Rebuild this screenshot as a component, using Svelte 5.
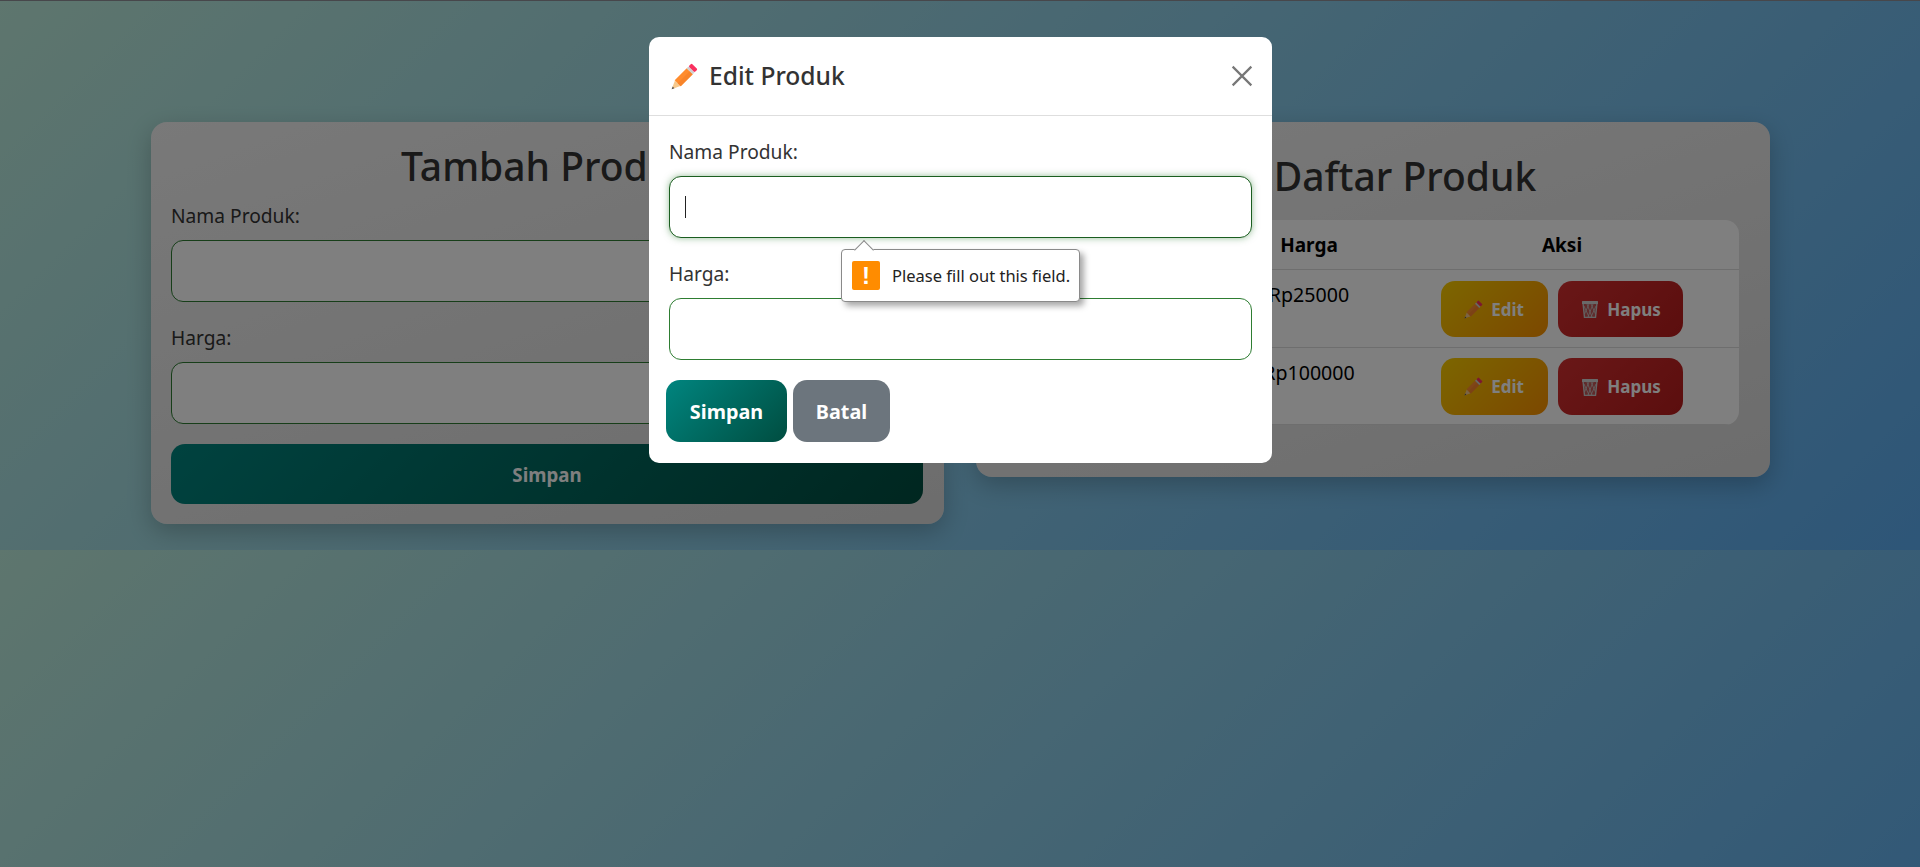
<script>
  const rows = [
    { harga: 'Rp25000', cls: 'r1' },
    { harga: 'Rp100000', cls: 'r2' }
  ];
</script>

{#snippet pencil(cls)}
  <svg class={cls} viewBox="3 -2 35 35" aria-hidden="true">
    <g transform="rotate(45 18 18)">
      <polygon points="13,27 23,27 18,38" fill="#f7c98c" />
      <polygon points="16.4,34.5 19.6,34.5 18,38" fill="#555" />
      <rect x="12.5" y="5" width="11" height="22" fill="#ff8c2e" />
      <rect x="18" y="5" width="5.5" height="22" fill="#f8842a" />
      <rect x="12.5" y="1.5" width="11" height="3.5" fill="#cfcfcf" />
      <rect x="12.5" y="-4" width="11" height="5.5" rx="1.5" fill="#f9305f" />
    </g>
  </svg>
{/snippet}

{#snippet trash()}
  <svg class="ic-trash" viewBox="0 0 18 18" aria-hidden="true">
    <polygon points="2,3 16,3 14.5,17.5 3.5,17.5" fill="#b0b0b0" fill-opacity=".35" stroke="#c8c8c8" stroke-width="1.4" />
    <path d="M3 6 L8 17 M6 4 L11 17 M10 4 L14.5 14 M15 6 L10 17 M12 4 L7 17 M8 4 L3.5 14" stroke="#c8c8c8" stroke-width=".8" fill="none" />
    <rect x="1" y="1" width="16" height="3" rx=".6" fill="#d2d2d2" />
  </svg>
{/snippet}

<div class="topline"></div>
<main class="page">
  <section class="card form-card">
    <h2>Tambah Produk</h2>
    <div class="group">
      <label for="a1">Nama Produk:</label>
      <input id="a1" type="text" />
    </div>
    <div class="group">
      <label for="a2">Harga:</label>
      <input id="a2" type="text" />
    </div>
    <button class="btn teal wide">Simpan</button>
  </section>

  <section class="card list-card">
    <h2 class="list-title">Daftar Produk</h2>
    <table>
      <colgroup>
        <col class="c-name" /><col class="c-price" /><col class="c-act" />
      </colgroup>
      <thead>
        <tr><th></th><th>Harga</th><th>Aksi</th></tr>
      </thead>
      <tbody>
        {#each rows as row}
          <tr class={row.cls}>
            <td></td>
            <td class="price">{row.harga}</td>
            <td class="actions">
              <button class="mini yellow">{@render pencil('ic-mini')}Edit</button>
              <button class="mini red">{@render trash()}Hapus</button>
            </td>
          </tr>
        {/each}
      </tbody>
    </table>
  </section>
</main>

<div class="backdrop"></div>

<div class="modal-wrap">
  <div class="modal">
    <header class="modal-head">
      {@render pencil('ic-head')}
      <h3>Edit Produk</h3>
      <button class="close" aria-label="Close">
        <svg viewBox="0 0 20 20"><path d="M1.5 1.5 L18.5 18.5 M18.5 1.5 L1.5 18.5" stroke="#777" stroke-width="2" fill="none" /></svg>
      </button>
    </header>
    <div class="modal-body">
      <div class="group">
        <label for="m1">Nama Produk:</label>
        <div class="field">
          <input id="m1" class="focus" type="text" />
          <span class="caret"></span>
        </div>
        <div class="bubble">
          <span class="arrow"></span>
          <span class="warn">!</span>
          <span class="msg">Please fill out this field.</span>
        </div>
      </div>
      <div class="group">
        <label for="m2">Harga:</label>
        <input id="m2" type="text" />
      </div>
      <div class="modal-actions">
        <button class="btn teal">Simpan</button>
        <button class="btn grey">Batal</button>
      </div>
    </div>
  </div>
</div>

<style>
  :global(body) {
    margin: 0;
    font-family: "Noto Sans", "Open Sans", sans-serif;
    color: #333;
    background: linear-gradient(135deg, #bcecdc, #5cacf0);
  }
  .topline {
    height: 1px;
    background: #8e8e96;
  }
  .page {
    display: grid;
    grid-template-columns: 793px 794px;
    column-gap: 32px;
    align-items: start;
    padding: 121px 150px 26px 151px;
  }
  .card {
    background: linear-gradient(160deg, #f2f2f2, #dadada);
    border-radius: 16px;
    box-shadow: 0 8px 24px rgba(0, 0, 0, 0.22);
    box-sizing: border-box;
  }
  .form-card {
    padding: 20px;
    height: 402px;
  }
  .list-card {
    padding: 30px 31px 0;
    height: 355px;
  }
  h2 {
    margin: 0 0 15px;
    font-size: 39px;
    line-height: 48px;
    font-weight: 500;
    text-align: center;
    color: #333;
  }
  .list-title {
    margin-bottom: 20px;
    padding-left: 64px;
  }
  .group {
    position: relative;
    height: 122.3px;
  }
  label {
    display: block;
    font-size: 19.2px;
    line-height: 21px;
    margin-bottom: 14px;
  }
  input {
    display: block;
    width: 100%;
    height: 61.5px;
    box-sizing: border-box;
    border: 1px solid #2e7d32;
    border-radius: 12px;
    background: #fff;
    outline: none;
    padding: 0 14px;
    caret-color: transparent;
  }
  input.focus {
    border-color: #1b5e20;
    box-shadow: 0 0 7px rgba(46, 125, 50, 0.5);
  }
  .field {
    position: relative;
  }
  .caret {
    position: absolute;
    left: 16px;
    top: 20px;
    width: 1px;
    height: 22px;
    background: #222;
  }
  .btn {
    border: 0;
    color: #fff;
    font-family: inherit;
    font-weight: 700;
    font-size: 19.8px;
    border-radius: 14px;
    cursor: pointer;
    width: 121px;
  }
  .teal {
    background: linear-gradient(135deg, #00857f, #004d40);
  }
  .wide {
    display: block;
    width: 752px;
    height: 60px;
    margin-top: -5.6px;
    font-size: 18.7px;
  }
  .grey {
    background: #6c757d;
    width: 97px;
  }
  table {
    width: 100%;
    table-layout: fixed;
    border-collapse: separate;
    border-spacing: 0;
    background: #fff;
    border-radius: 14px;
    overflow: hidden;
    color: #000;
    font-size: 19px;
  }
  .c-name {
    width: 226px;
  }
  .c-price {
    width: 152px;
  }
  th {
    height: 50px;
    padding: 0;
    font-weight: 700;
    text-align: center;
    border-bottom: 1px solid #ddd;
    box-sizing: border-box;
  }
  td {
    padding: 0;
    box-sizing: border-box;
    vertical-align: top;
    border-bottom: 1px solid #ddd;
  }
  .r1 td {
    height: 78px;
  }
  .r2 td {
    height: 77px;
  }
  .price {
    text-align: center;
    font-size: 19.6px;
    line-height: 27px;
    padding-top: 11px;
  }
  .actions {
    padding-top: 11px;
    text-align: center;
  }
  .r2 .actions {
    padding-top: 10px;
  }
  .r2 .mini {
    height: 57px;
  }
  .mini {
    display: inline-flex;
    align-items: center;
    justify-content: center;
    gap: 8px;
    height: 56px;
    border: 0;
    border-radius: 14px;
    color: #fff;
    font-family: inherit;
    font-weight: 700;
    font-size: 17px;
    padding: 0;
    vertical-align: top;
  }
  .yellow {
    width: 107px;
    background: linear-gradient(135deg, #f8cc00, #f89000);
  }
  .red {
    width: 125px;
    margin-left: 6px;
    background: linear-gradient(135deg, #d32f2f, #b71c1c);
  }
  .ic-mini {
    width: 19px;
    height: 19px;
  }
  .ic-trash {
    width: 18px;
    height: 18px;
  }
  .ic-head {
    width: 27px;
    height: 27px;
    flex: none;
    margin-right: 11px;
  }
  .backdrop {
    position: fixed;
    inset: 0;
    background: rgba(0, 0, 0, 0.5);
  }
  .modal-wrap {
    position: fixed;
    inset: 0;
    display: flex;
    justify-content: center;
    align-items: flex-start;
    padding-top: 37px;
  }
  .modal {
    width: 623px;
    height: 426px;
    background: #fff;
    border-radius: 10px;
    box-sizing: border-box;
    margin-left: 1px;
  }
  .modal-head {
    height: 78px;
    display: flex;
    align-items: center;
    padding: 0 19px 0 22px;
    border-bottom: 1px solid #dedede;
  }
  .modal-head h3 {
    margin: -2px 0 0;
    flex: 1;
    font-size: 24.6px;
    font-weight: 500;
    color: #333;
  }
  .close {
    width: 22px;
    height: 22px;
    padding: 0;
    border: 0;
    background: none;
  }
  .close svg {
    display: block;
    width: 22px;
    height: 22px;
  }
  .modal-body {
    padding: 25px 20px 0;
  }
  .modal-actions {
    display: flex;
    gap: 6px;
    height: 62px;
    margin: -5.6px 0 0 -3px;
  }
  .bubble {
    position: absolute;
    left: 172px;
    top: 107.5px;
    width: 239px;
    height: 53px;
    box-sizing: border-box;
    display: flex;
    align-items: center;
    background: #fff;
    border: 1px solid #8a8a8a;
    border-radius: 4px;
    box-shadow: 4px 4px 6px rgba(0, 0, 0, 0.35);
    padding-left: 10px;
    z-index: 2;
  }
  .arrow {
    position: absolute;
    left: 15px;
    top: -7px;
    width: 13px;
    height: 13px;
    background: #fff;
    border-left: 1px solid #8a8a8a;
    border-top: 1px solid #8a8a8a;
    transform: rotate(45deg);
  }
  .warn {
    width: 28px;
    height: 29px;
    background: #ff8c00;
    border-radius: 2px;
    color: #fff;
    font-family: "Liberation Sans", sans-serif;
    font-weight: 700;
    font-size: 24px;
    line-height: 29px;
    text-align: center;
    flex: none;
  }
  .msg {
    margin-left: 12px;
    font-size: 16.5px;
    color: #222;
    white-space: nowrap;
  }
</style>
